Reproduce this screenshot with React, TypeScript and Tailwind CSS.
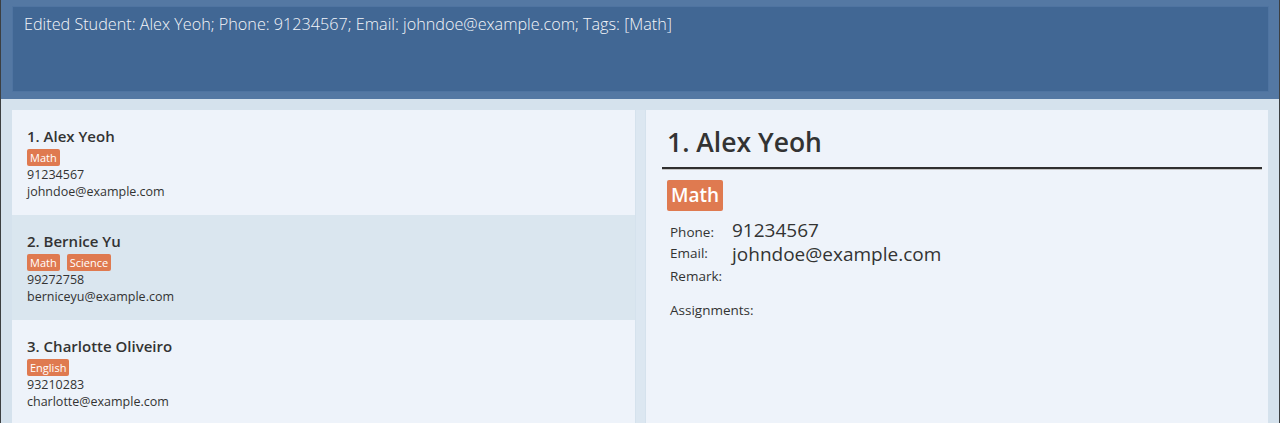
import React from "react";

const font = { fontFamily: '"Open Sans", "Noto Sans", sans-serif' };

type Student = { name: string; tags: string[]; phone: string; email: string };

const students: Student[] = [
  { name: "Alex Yeoh", tags: ["Math"], phone: "91234567", email: "johndoe@example.com" },
  { name: "Bernice Yu", tags: ["Math", "Science"], phone: "99272758", email: "berniceyu@example.com" },
  { name: "Charlotte Oliveiro", tags: ["English"], phone: "93210283", email: "charlotte@example.com" },
];

function Card({ s, i }: { s: Student; i: number }) {
  return (
    <div className={`h-[105px] shrink-0 pl-[15px] pt-[16px] ${i % 2 === 1 ? "bg-[#dae6ef]" : "bg-[#eef3fa]"}`}>
      <div className="text-[15px] leading-[20px] font-semibold text-[#333333]">
        {i + 1}. {s.name}
      </div>
      <div className="mt-[3px] flex gap-[7px]">
        {s.tags.map((t) => (
          <span key={t} className="h-[17px] rounded-[2px] bg-[#df7a50] px-[3px] text-[11px] leading-[17px] text-white">
            {t}
          </span>
        ))}
      </div>
      <div className="text-[12.5px] leading-[17px] text-[#333333]">{s.phone}</div>
      <div className="text-[12.5px] leading-[17px] text-[#333333]">{s.email}</div>
    </div>
  );
}

export default function App() {
  return (
    <div style={font} className="flex h-[423px] w-[1280px] flex-col overflow-hidden border-x border-[#3c3f41] bg-[#d5e2ed]">
      <div className="h-[99px] shrink-0 bg-[#5478a3] pl-[11px] pr-[10px] pt-[6px]">
        <div className="h-[86px] border border-[#4f74a1] bg-[#416794] pl-[11px] pt-[6px] text-[16.2px] font-light leading-[22px] text-[#f4f6fa]">
          Edited Student: Alex Yeoh; Phone: 91234567; Email: johndoe@example.com; Tags: [Math]
        </div>
      </div>
      <div className="flex min-h-0 flex-1 pl-[11px] pr-[11px] pt-[11px]">
        <div className="flex w-[623px] flex-col overflow-hidden">
          {students.map((s, i) => (
            <Card key={s.name} s={s} i={i} />
          ))}
        </div>
        <div className="w-[11px] shrink-0 pl-[1px]">
          <div className="h-full w-[9px] bg-[#dce7f1]" />
        </div>
        <div className="flex-1 bg-[#eef3fa] pl-[16px] pr-[6px] pt-[14px] text-[#333333]">
          <div className="border-b-[2px] border-[#2f2f2f] pb-[7px] pl-[5px] text-[26.5px] font-semibold leading-[36px] shadow-[0_1px_0_#c4c4c4]">
            1. Alex Yeoh
          </div>
          <div className="mt-[11px] pl-[5px]">
            <span className="inline-block h-[31px] rounded-[2px] bg-[#df7a50] px-[4px] text-[19px] font-semibold leading-[31px] text-white">
              Math
            </span>
          </div>
          <div className="mt-[7px] grid grid-cols-[62px_1fr] pl-[8px] text-[13.5px]">
            <div className="pt-[4px] leading-[20px]">Phone:</div>
            <div className="text-[19px] leading-[24px]">91234567</div>
            <div className="pt-[1px] leading-[20px]">Email:</div>
            <div className="text-[19px] leading-[24px]">johndoe@example.com</div>
            <div className="leading-[20px]">Remark:</div>
            <div />
          </div>
          <div className="mt-[14px] pl-[8px] text-[13.5px] leading-[20px]">Assignments:</div>
        </div>
      </div>
    </div>
  );
}
